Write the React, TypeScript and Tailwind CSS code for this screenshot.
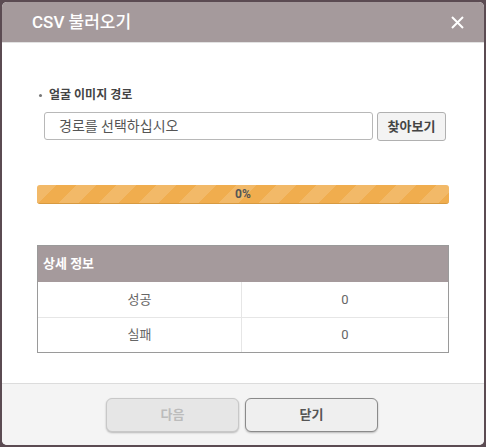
const font = { fontFamily: "Roboto, 'Noto Sans CJK KR', sans-serif" };

const stripes =
  "bg-[#f0ad4e] bg-[linear-gradient(135deg,rgba(255,255,255,.15)_25%,transparent_25%,transparent_50%,rgba(255,255,255,.15)_50%,rgba(255,255,255,.15)_75%,transparent_75%,transparent)] bg-[length:40px_40px]";

const rows = [
  { label: "성공", value: 0 },
  { label: "실패", value: 0 },
];

export default function App() {
  return (
    <div className="w-[486px] h-[447px] bg-[#5b4b52] p-[2px]" style={font}>
      <div className="h-full flex flex-col bg-white rounded-[5px] overflow-hidden">
        {/* 헤더 */}
        <div className="h-[41px] shrink-0 bg-[#a59a9c] border-b border-[#e2e2e2] flex items-center justify-between pl-[30px] pr-[20px]">
          <span className="text-[17px] font-medium text-white leading-none">CSV 불러오기</span>
          <svg width="13" height="13" viewBox="0 0 13 13">
            <path d="M1 1L12 12M12 1L1 12" stroke="white" strokeWidth="2" />
          </svg>
        </div>

        {/* 본문 */}
        <div className="flex-1 px-[35px] pt-[43px]">
          <div className="flex items-center h-[18px] text-[12px] font-bold text-[#444]">
            <span className="w-[3px] h-[3px] rounded-full bg-[#777] ml-[2px] mr-[7px]" />
            <span>얼굴 이미지 경로</span>
          </div>

          <div className="flex gap-[4px] ml-[7px] mt-[8px]">
            <div className="w-[329px] h-[28px] border border-[#b8b8b8] rounded-[3px] flex items-center pl-[14px] text-[14px] text-[#555]">
              경로를 선택하십시오
            </div>
            <button className="w-[69px] h-[29px] border border-[#b0b0b0] rounded-[3px] bg-[#f3f3f3] text-[13px] font-bold text-[#444]">
              찾아보기
            </button>
          </div>

          <div
            className={`mt-[44px] h-[19px] rounded-[3px] border-b border-[#d89a40] flex items-center justify-center text-[12px] font-bold text-[#555] ${stripes}`}
          >
            0%
          </div>

          <div className="mt-[41px] border border-[#9a9a9a]">
            <div className="h-[36px] bg-[#a59a9c] flex items-center pl-[5px] text-[13px] font-bold text-white">
              상세 정보
            </div>
            {rows.map((r, i) => (
              <div
                key={r.label}
                className={`grid grid-cols-[204px_1fr] h-[35px] text-[13px] text-[#666] ${i > 0 ? "border-t border-[#e6e6e6]" : ""}`}
              >
                <div className="flex items-center justify-center border-r border-[#e6e6e6]">{r.label}</div>
                <div className="flex items-center justify-center">{r.value}</div>
              </div>
            ))}
          </div>
        </div>

        {/* 하단 버튼 */}
        <div className="h-[62px] shrink-0 bg-[#f4f4f4] border-t border-[#dcdcdc] flex justify-center gap-[6px] pt-[14px] pr-[2px]">
          <button
            disabled
            className="w-[133px] h-[34px] rounded-[6px] border border-[#c8c8c8] bg-[#e6e6e6] text-[13px] font-bold text-[#bcbcbc] shadow-[0_1px_2px_rgba(0,0,0,0.25)]"
          >
            다음
          </button>
          <button className="w-[133px] h-[34px] rounded-[6px] border border-[#8a8a8a] bg-[#efefef] text-[13px] font-bold text-[#555] shadow-[0_1px_2px_rgba(0,0,0,0.25)]">
            닫기
          </button>
        </div>
      </div>
    </div>
  );
}
